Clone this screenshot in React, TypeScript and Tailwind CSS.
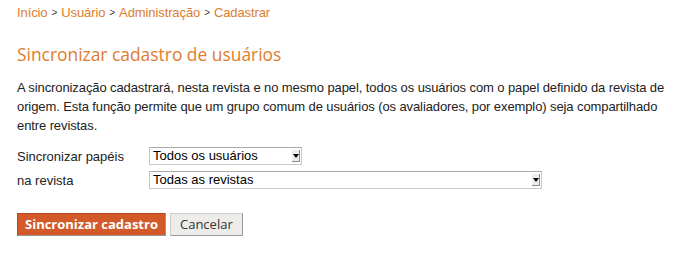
function OldSelect({ value, width }: { value: string; width: string }) {
  return (
    <div className={`${width} h-[18px] flex items-stretch border border-[#c8c8c8] border-t-[#a8a8a8] bg-white`}>
      <span className="flex-1 pl-[3px] text-[13px] leading-[16px] text-black">{value}</span>
      <span className="w-[8px] my-[2px] mr-[1px] flex items-center justify-center bg-[#ececec] border-r border-b border-[#8a8a8a]">
        <span className="block w-0 h-0 border-l-[3px] border-r-[3px] border-t-[4px] border-l-transparent border-r-transparent border-t-black" />
      </span>
    </div>
  );
}

export default function App() {
  const crumbs = ['Início', 'Usuário', 'Administração', 'Cadastrar'];

  return (
    <div className="w-[690px] h-[264px] bg-white px-[17px] pt-[4px] font-['Liberation_Sans',Arial,sans-serif]">
      {/* Breadcrumb */}
      <div className="flex items-center text-[13px] tracking-[-0.1px] leading-[18px] text-[#dd7d2e]">
        {crumbs.map((c, i) => (
          <span key={c} className="flex items-center">
            {i > 0 && <span className="mx-[4px] text-[10px] text-[#444]">&gt;</span>}
            {c}
          </span>
        ))}
      </div>

      {/* Title */}
      <h2 className="mt-[20px] text-[17.4px] leading-[24px] text-[#dd7d2e] font-['Open_Sans',sans-serif]">
        Sincronizar cadastro de usuários
      </h2>

      {/* Description */}
      <p className="mt-[12px] text-[13px] tracking-[-0.1px] leading-[19px] text-[#222]">
        A sincronização cadastrará, nesta revista e no mesmo papel, todos os usuários com o papel definido da revista de
        origem. Esta função permite que um grupo comum de usuários (os avaliadores, por exemplo) seja compartilhado
        entre revistas.
      </p>

      {/* Form */}
      <div className="mt-[12px] grid grid-cols-[132px_1fr] gap-y-[5px] text-[13px] text-[#222]">
        <label className="leading-[19px]">Sincronizar papéis</label>
        <OldSelect value="Todos os usuários" width="w-[153px]" />
        <label className="leading-[19px]">na revista</label>
        <OldSelect value="Todas as revistas" width="w-[393px]" />
      </div>

      {/* Actions */}
      <div className="mt-[23px] flex gap-[4px] font-['Open_Sans',sans-serif] text-[13px]">
        <button className="h-[23px] px-[7px] bg-[#d35a28] text-white font-bold border border-[#b5481c] border-r-[#999] border-b-[#999]">
          Sincronizar cadastro
        </button>
        <button className="h-[23px] px-[9px] bg-[#eeece8] text-[#333] border border-[#ccc] border-r-[#999] border-b-[#999]">
          Cancelar
        </button>
      </div>
    </div>
  );
}
